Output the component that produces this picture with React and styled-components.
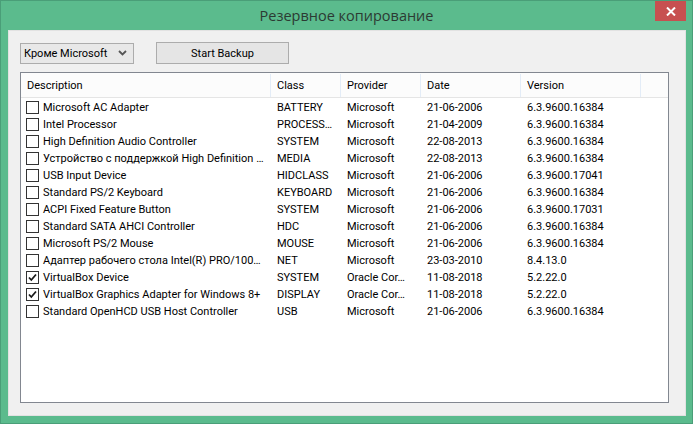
import React from 'react';
import styled, { createGlobalStyle } from 'styled-components';

const GlobalStyle = createGlobalStyle`
  html, body { margin: 0; padding: 0; background: #ffffff; }
  body { font-family: Roboto, "Open Sans", sans-serif; }
`;

const rows = [
  { name: 'Microsoft AC Adapter', cls: 'BATTERY', provider: 'Microsoft', date: '21-06-2006', version: '6.3.9600.16384' },
  { name: 'Intel Processor', cls: 'PROCESS…', provider: 'Microsoft', date: '21-04-2009', version: '6.3.9600.16384' },
  { name: 'High Definition Audio Controller', cls: 'SYSTEM', provider: 'Microsoft', date: '22-08-2013', version: '6.3.9600.16384' },
  { name: 'Устройство с поддержкой High Definition …', cls: 'MEDIA', provider: 'Microsoft', date: '22-08-2013', version: '6.3.9600.16384' },
  { name: 'USB Input Device', cls: 'HIDCLASS', provider: 'Microsoft', date: '21-06-2006', version: '6.3.9600.17041' },
  { name: 'Standard PS/2 Keyboard', cls: 'KEYBOARD', provider: 'Microsoft', date: '21-06-2006', version: '6.3.9600.16384' },
  { name: 'ACPI Fixed Feature Button', cls: 'SYSTEM', provider: 'Microsoft', date: '21-06-2006', version: '6.3.9600.17031' },
  { name: 'Standard SATA AHCI Controller', cls: 'HDC', provider: 'Microsoft', date: '21-06-2006', version: '6.3.9600.16384' },
  { name: 'Microsoft PS/2 Mouse', cls: 'MOUSE', provider: 'Microsoft', date: '21-06-2006', version: '6.3.9600.16384' },
  { name: 'Адаптер рабочего стола Intel(R) PRO/100…', cls: 'NET', provider: 'Microsoft', date: '23-03-2010', version: '8.4.13.0' },
  { name: 'VirtualBox Device', cls: 'SYSTEM', provider: 'Oracle Cor…', date: '11-08-2018', version: '5.2.22.0', checked: true },
  { name: 'VirtualBox Graphics Adapter for Windows 8+', cls: 'DISPLAY', provider: 'Oracle Cor…', date: '11-08-2018', version: '5.2.22.0', checked: true },
  { name: 'Standard OpenHCD USB Host Controller', cls: 'USB', provider: 'Microsoft', date: '21-06-2006', version: '6.3.9600.16384' },
];

const columns = [
  { title: 'Description', width: 250 },
  { title: 'Class', width: 70 },
  { title: 'Provider', width: 80 },
  { title: 'Date', width: 100 },
  { title: 'Version', width: 120 },
];

function CheckBox({ checked }) {
  return (
    <Box>
      {checked && (
        <svg width="11" height="11" viewBox="0 0 11 11">
          <path d="M2 5.5 L4.3 8 L9 2.5" fill="none" stroke="#1a1a1a" strokeWidth="1.8" />
        </svg>
      )}
    </Box>
  );
}

export default function App() {
  return (
    <>
      <GlobalStyle />
      <Window>
        <TitleBar>
          <Title>Резервное копирование</Title>
          <CloseButton>
            <svg width="10" height="9" viewBox="0 0 10 9">
              <path d="M1 0.5 L9 8.5 M9 0.5 L1 8.5" stroke="#ffffff" strokeWidth="2" />
            </svg>
          </CloseButton>
        </TitleBar>
        <Client>
          <Toolbar>
            <Combo>
              <span>Кроме Microsoft</span>
              <svg width="9" height="6" viewBox="0 0 9 6">
                <path d="M1 1 L4.5 4.5 L8 1" fill="none" stroke="#555" strokeWidth="1.8" />
              </svg>
            </Combo>
            <Button>Start Backup</Button>
          </Toolbar>
          <ListView>
            <Header>
              {columns.map((c) => (
                <HeaderCell key={c.title} $w={c.width}>{c.title}</HeaderCell>
              ))}
              <HeaderFiller />
            </Header>
            {rows.map((r) => (
              <Row key={r.name}>
                <Cell $w={250} $first>
                  <CheckBox checked={r.checked} />
                  <span>{r.name}</span>
                </Cell>
                <Cell $w={70}>{r.cls}</Cell>
                <Cell $w={80}>{r.provider}</Cell>
                <Cell $w={100}>{r.date}</Cell>
                <Cell $w={120}>{r.version}</Cell>
              </Row>
            ))}
          </ListView>
        </Client>
      </Window>
    </>
  );
}

const Window = styled.div`
  width: 693px;
  height: 424px;
  box-sizing: border-box;
  background: #5bbb8d;
  border: 1px solid #4a9e78;
  display: flex;
  flex-direction: column;
`;

const TitleBar = styled.div`
  height: 29px;
  position: relative;
  display: flex;
  align-items: center;
  justify-content: center;
`;

const Title = styled.div`
  font-family: "Open Sans", sans-serif;
  font-size: 14.5px;
  color: #2c3a33;
  margin-top: -1px;
`;

const CloseButton = styled.div`
  position: absolute;
  right: 6px;
  top: 0;
  width: 31px;
  height: 20px;
  background: #c75050;
  display: flex;
  align-items: center;
  justify-content: center;
`;

const Client = styled.div`
  flex: 1;
  margin: 0 6px 7px 7px;
  background: #f0f0f0;
  border: 1px solid #e2e2e2;
  padding: 11px 16px 12px 11px;
  display: flex;
  flex-direction: column;
  gap: 8px;
  font-size: 11px;
  color: #000;
`;

const Toolbar = styled.div`
  display: flex;
  align-items: center;
  gap: 22px;
  height: 22px;
`;

const Combo = styled.div`
  width: 114px;
  height: 21px;
  box-sizing: border-box;
  border: 1px solid #acacac;
  background: #e8e8e8;
  display: flex;
  align-items: center;
  justify-content: space-between;
  padding: 0 6px 0 3px;
`;

const Button = styled.div`
  width: 133px;
  height: 22px;
  box-sizing: border-box;
  border: 1px solid #acacac;
  background: #e5e5e5;
  display: flex;
  align-items: center;
  justify-content: center;
`;

const ListView = styled.div`
  flex: 1;
  border: 1px solid #828790;
  background: #ffffff;
  display: flex;
  flex-direction: column;
`;

const Header = styled.div`
  display: flex;
  height: 25px;
  padding-top: 1px;
  box-sizing: border-box;
  margin-bottom: 1px;
  border-bottom: 1px solid #e5e5e5;
  background: #fcfcfc;
`;

const HeaderCell = styled.div`
  width: ${(p) => p.$w}px;
  box-sizing: border-box;
  border-right: 1px solid #e3ecf7;
  padding-left: 6px;
  display: flex;
  align-items: center;
`;

const HeaderFiller = styled.div`
  flex: 1;
`;

const Row = styled.div`
  display: flex;
  height: 17px;
  align-items: center;
`;

const Cell = styled.div`
  width: ${(p) => p.$w}px;
  box-sizing: border-box;
  padding-left: ${(p) => (p.$first ? 5 : 6)}px;
  display: flex;
  align-items: center;
  gap: 4px;
  white-space: nowrap;
  overflow: hidden;
`;

const Box = styled.div`
  width: 13px;
  height: 13px;
  box-sizing: border-box;
  border: 1px solid #333333;
  background: #ffffff;
  display: flex;
  align-items: center;
  justify-content: center;
  flex: none;
`;
